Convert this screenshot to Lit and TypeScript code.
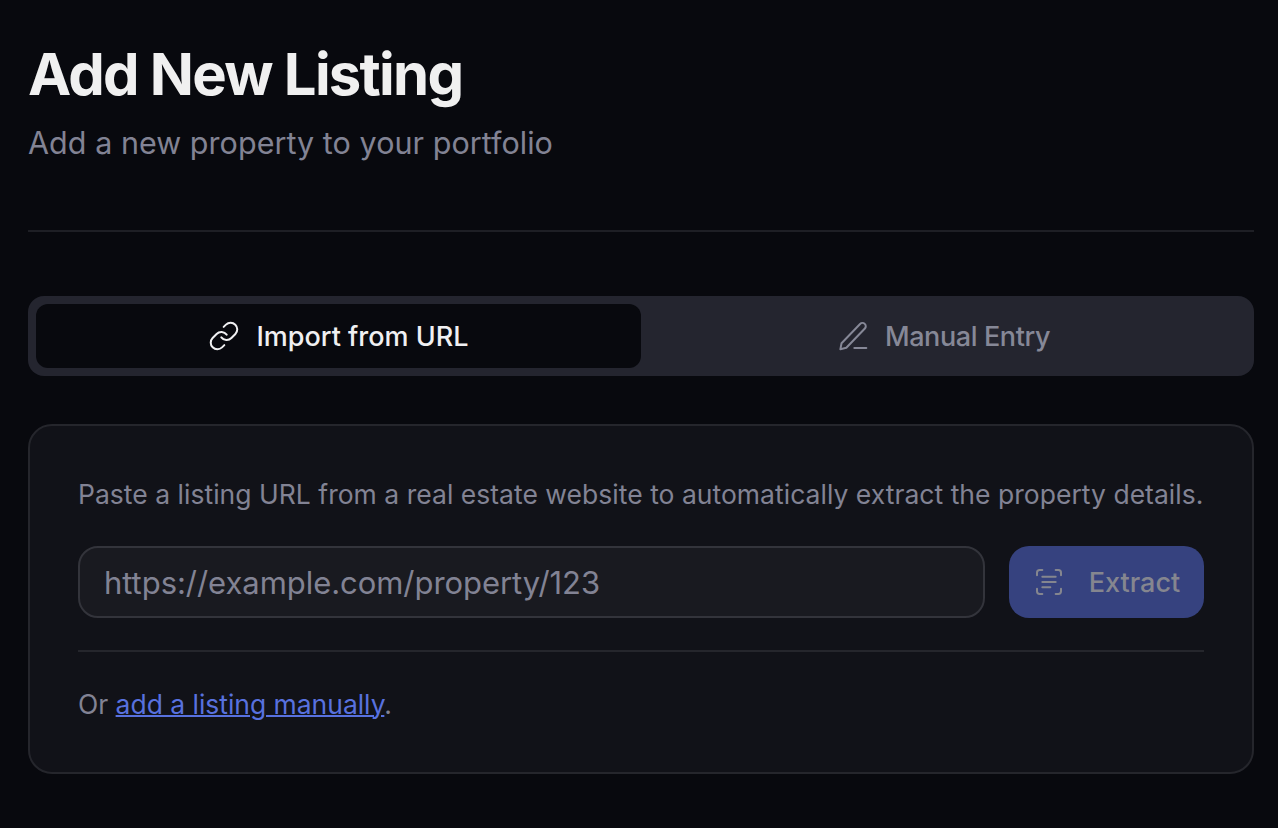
import { LitElement, html, css } from "lit";
import { customElement } from "lit/decorators.js";

@customElement("app-root")
export class AppRoot extends LitElement {
  static styles = css`
    :host {
      display: block;
      box-sizing: border-box;
      min-height: 828px;
      background: #08090e;
      padding: 40px 24px 0 28px;
      font-family: "Inter", "Noto Sans", sans-serif;
      color: #f0f0f2;
    }
    * { box-sizing: border-box; }
    .header { border-bottom: 2px solid #1e1f25; height: 192px; }
    h1 { margin: 0; font-size: 58px; line-height: 68px; font-weight: 700; letter-spacing: -1.75px; color: #f0f0f0; }
    .sub { margin: 0; font-size: 30.5px; line-height: 44px; margin-top: 13px; color: #828394; letter-spacing: 0.04px; }
    .tabs { margin-top: 64px; background: #24252f; border-radius: 16px; padding: 8px; display: grid; grid-template-columns: 1fr 1fr; height: 80px; }
    .tab { display: flex; align-items: center; justify-content: center; gap: 16px; font-size: 27px; font-weight: 500; color: #868897; border-radius: 12px; }
    .tab.manual { letter-spacing: -0.4px; }
    .tab.on { background: #08090e; color: #f0f0f2; }
    .tab svg { width: 32px; height: 32px; fill: none; stroke: currentColor; stroke-width: 1.5; stroke-linecap: round; stroke-linejoin: round; }
    .card { margin-top: 48px; height: 350px; background: #111218; border: 2px solid #25262c; border-radius: 24px; padding: 48px 48px 0; }
    .desc { margin: 0; font-size: 26.5px; line-height: 40px; color: #828394; white-space: nowrap; letter-spacing: 0.02px; }
    .row { display: flex; gap: 24px; margin-top: 32px; height: 72px; }
    .input { flex: 1; background: #191a20; border: 2px solid #33343b; border-radius: 20px; display: flex; align-items: center; padding: 0 24px; font-size: 31px; letter-spacing: -0.05px; color: #828394; }
    .btn { width: 195px; background: #36427f; border-radius: 20px; display: flex; align-items: center; justify-content: center; gap: 24px; font-size: 27px; font-weight: 500; color: #85868f; }
    .btn svg { width: 32px; height: 32px; fill: none; stroke: currentColor; stroke-width: 1.5; stroke-linecap: round; stroke-linejoin: round; }
    .foot { margin-top: 32px; border-top: 2px solid #25262c; padding-top: 32px; font-size: 26.5px; line-height: 40px; color: #828394; letter-spacing: -0.03px; }
    a { color: #5871df; text-decoration: underline; text-decoration-thickness: 2px; }
  `;

  render() {
    return html`
      <div class="header">
        <h1>Add New Listing</h1>
        <p class="sub">Add a new property to your portfolio</p>
      </div>
      <div class="tabs">
        <div class="tab on">
          <svg viewBox="0 0 24 24"><path d="M10 13a5 5 0 0 0 7.54.54l3-3a5 5 0 0 0-7.07-7.07l-1.72 1.71"/><path d="M14 11a5 5 0 0 0-7.54-.54l-3 3a5 5 0 0 0 7.07 7.07l1.71-1.71"/></svg>
          <span>Import from URL</span>
        </div>
        <div class="tab manual">
          <svg viewBox="0 0 24 24"><path d="M2.5 22l.9-4.6L17.3 3a2.4 2.4 0 0 1 3.6 3.4L7 20.8 2.5 22z"/><path d="M13 21h9"/></svg>
          <span>Manual Entry</span>
        </div>
      </div>
      <div class="card">
        <p class="desc">Paste a listing URL from a real estate website to automatically extract the property details.</p>
        <div class="row">
          <div class="input">https://example.com/property/123</div>
          <div class="btn">
            <svg viewBox="0 0 24 24"><path d="M3 7V5a2 2 0 0 1 2-2h2"/><path d="M17 3h2a2 2 0 0 1 2 2v2"/><path d="M21 17v2a2 2 0 0 1-2 2h-2"/><path d="M7 21H5a2 2 0 0 1-2-2v-2"/><path d="M7 8h10"/><path d="M7 12h10"/><path d="M7 16h6"/></svg>
            <span>Extract</span>
          </div>
        </div>
        <div class="foot">Or <a href="#">add a listing manually</a>.</div>
      </div>
    `;
  }
}
